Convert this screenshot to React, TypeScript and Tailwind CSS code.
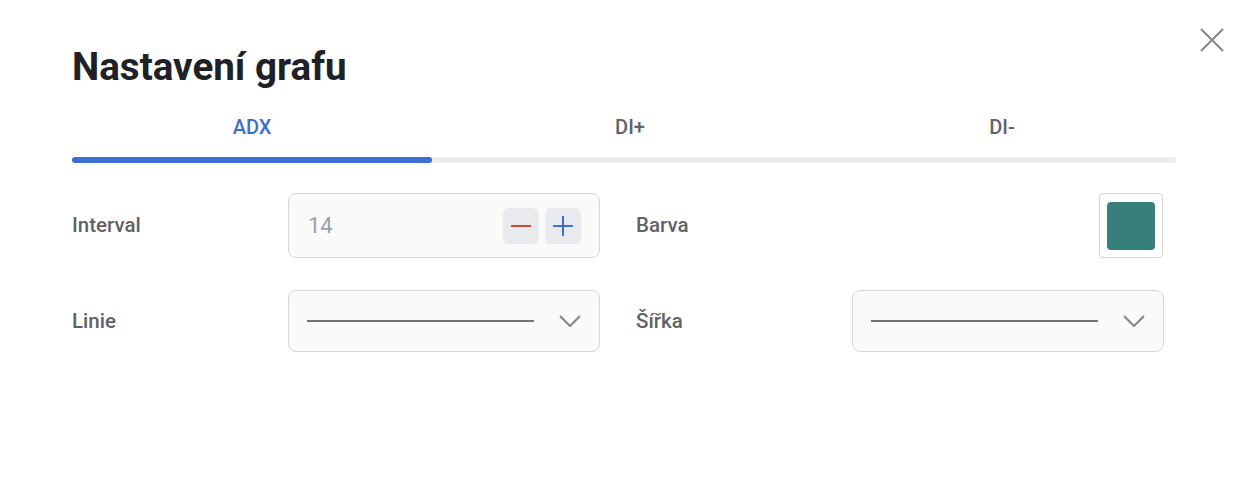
import { useState } from 'react';

const tabs = [
  { label: 'ADX', width: 'w-[360px]' },
  { label: 'DI+', width: 'w-[396px]' },
  { label: 'DI-', width: 'w-[348px]' },
];

function Chevron() {
  return (
    <svg width="22" height="12" viewBox="0 0 22 12" fill="none">
      <path d="M1 1l10 10L21 1" stroke="#80868b" strokeWidth="2" />
    </svg>
  );
}

function LineSelect() {
  return (
    <div className="flex h-[62px] w-[312px] items-center rounded-lg border border-[#d6d6d6] bg-[#fafafa] pl-[18px] pr-[18px]">
      <div className="h-[2px] w-[227px] bg-[#737373]" />
      <div className="ml-auto flex items-center">
        <Chevron />
      </div>
    </div>
  );
}

export default function App() {
  const [active, setActive] = useState(0);
  const [interval, setInterval] = useState(14);

  return (
    <div className="relative h-[478px] w-[1248px] bg-white font-['Roboto',sans-serif]">
      <button className="absolute left-[1199px] top-[27px] p-0" aria-label="Zavřít">
        <svg width="26" height="26" viewBox="0 0 26 26" fill="none">
          <path d="M2 2l22 22M24 2L2 24" stroke="#80868b" strokeWidth="2" />
        </svg>
      </button>

      <div className="px-[72px] pt-[47px]">
        <h1 className="text-[38.6px] leading-[40px] font-bold text-[#202124]">Nastavení grafu</h1>

        <div className="mt-[26px] w-[1104px]">
          <div className="flex">
            {tabs.map((t, i) => (
              <button
                key={t.label}
                onClick={() => setActive(i)}
                className={`${t.width} text-center text-[20px] leading-[28px] font-medium ${
                  i === active ? 'text-[#3b6fd6]' : 'text-[#5f6368]'
                }`}
              >
                {t.label}
              </button>
            ))}
          </div>
          <div className="mt-[16px] h-[6px] w-full rounded-full bg-[#ebebeb]">
            <div className="h-[6px] w-[360px] rounded-full bg-[#3b6fd6]" />
          </div>
        </div>

        <div className="mt-[30px] flex items-center">
          <div className="w-[216px] text-[20.5px] font-medium text-[#5f6368]">Interval</div>
          <div className="flex h-[65px] w-[312px] items-center rounded-lg border border-[#d6d6d6] bg-[#fafafa] pl-[19px] pr-[18px]">
            <span className="text-[22px] text-[#9aa0a6]">{interval}</span>
            <div className="ml-auto flex gap-[6px]">
              <button
                onClick={() => setInterval(interval - 1)}
                className="flex h-[36px] w-[36px] items-center justify-center rounded-md bg-[#e8eaed]"
              >
                <svg width="20" height="20" viewBox="0 0 20 20">
                  <path d="M0 10h20" stroke="#d2452a" strokeWidth="2" />
                </svg>
              </button>
              <button
                onClick={() => setInterval(interval + 1)}
                className="flex h-[36px] w-[36px] items-center justify-center rounded-md bg-[#e8eaed]"
              >
                <svg width="20" height="20" viewBox="0 0 20 20">
                  <path d="M0 10h20M10 0v20" stroke="#3b6fd6" strokeWidth="2" />
                </svg>
              </button>
            </div>
          </div>
          <div className="ml-[36px] w-[216px] text-[20.5px] font-medium text-[#5f6368]">Barva</div>
          <div className="flex w-[312px] justify-end">
            <div className="mr-[1px] flex h-[65px] w-[64px] items-center justify-center rounded-sm border border-[#d6d6d6] bg-white">
              <div className="h-[48px] w-[48px] rounded bg-[#377f7b]" />
            </div>
          </div>
        </div>

        <div className="mt-[32px] flex items-center">
          <div className="w-[216px] text-[20.5px] font-medium text-[#5f6368]">Linie</div>
          <LineSelect />
          <div className="ml-[36px] w-[216px] text-[20.5px] font-medium text-[#5f6368]">Šířka</div>
          <LineSelect />
        </div>
      </div>
    </div>
  );
}
